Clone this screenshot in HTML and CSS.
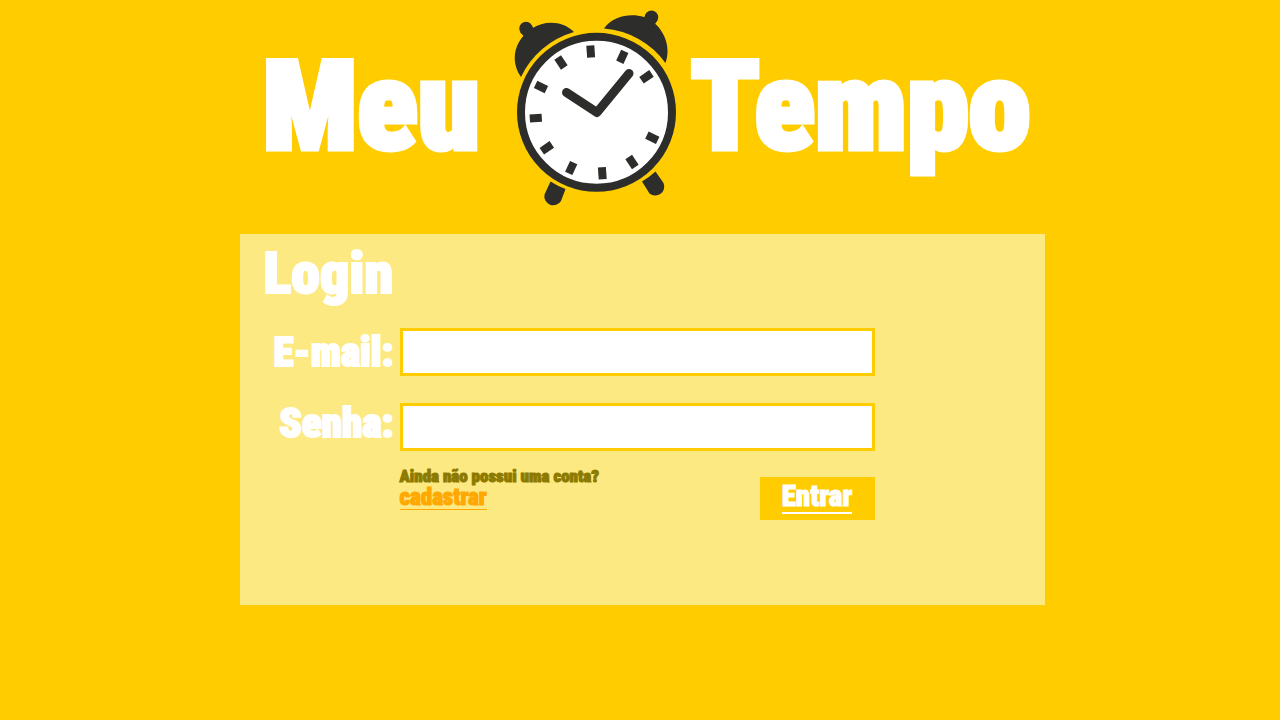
FILE: index.html
```html
<!DOCTYPE html>
<html lang="pt-BR">
<head>
<meta charset="utf-8">
<meta name="viewport" content="width=device-width, initial-scale=1">
<title>Meu Tempo</title>
<link rel="stylesheet" href="styles.css">
</head>
<body>
<div class="page">
  <h1 class="brand">
    <span class="brand-word">Meu</span>
    <svg class="clock" viewBox="510 5 170 205" aria-hidden="true">
      <g fill="#2d2d2b">
        <path d="M521 77C513 66 513 52 519 42C522 37 526 32 532 28.500C545 20 563 21 574 32A84 84 0 0 0 521 77Z"/>
        <path d="M604 28.500C613 16 630 13 644 17C663 24 672 46 665.500 63A84 84 0 0 0 604 28.500Z"/>
        <circle cx="526" cy="28.500" r="6.700"/>
        <circle cx="651.500" cy="17.200" r="6.700"/>
        <path d="M520 32L530 43L539 36L532 26Z"/>
        <path d="M645.500 14L642 25L652 29L657.500 20Z"/>
        <path d="M550.500 181.500A84 84 0 0 0 565.500 189L561 201A9 9 0 0 1 544.500 194.500Z"/>
        <path d="M642 181.500A84 84 0 0 0 655.500 171.500L663.500 183A9 9 0 0 1 649.500 193.500Z"/>
      </g>
      <circle cx="596.500" cy="112.300" r="75.500" fill="#fff" stroke="#2d2d2b" stroke-width="8"/>
      <g stroke="#2d2d2b" stroke-width="8">
        <path d="M590.300 45.500L591.100 57.500"/>
        <path d="M624.800 51.400L619.800 62.200"/>
        <path d="M651.500 73.400L641.500 80.200"/>
        <path d="M557.700 57.500L564.300 67.500"/>
        <path d="M535.600 84.400L546.400 89.600"/>
        <path d="M529.800 118.600L541.800 117.800"/>
        <path d="M541.800 151.200L551.800 144.400"/>
        <path d="M568.700 173.400L573.700 162.600"/>
        <path d="M602.700 179.300L601.900 167.300"/>
        <path d="M635.300 167L628.700 157"/>
        <path d="M657.700 140.300L646.900 135.100"/>
      </g>
      <path d="M566.500 92.500L597 112.500L629 73.500" fill="none" stroke="#2d2d2b" stroke-width="9" stroke-linecap="round" stroke-linejoin="round"/>
    </svg>
    <span class="brand-word">Tempo</span>
  </h1>

  <main class="panel">
    <h2 class="panel-title">Login</h2>
    <form class="login">
      <label class="label" for="email">E-mail:</label>
      <input class="field" id="email" name="email" type="email">
      <label class="label label-senha" for="senha">Senha:</label>
      <input class="field" id="senha" name="senha" type="password">
      <div class="actions">
        <p class="signup">Ainda não possui uma conta?<br><a class="signup-link" href="#cadastrar">cadastrar</a></p>
        <button class="submit" type="submit"><span class="submit-text">Entrar</span></button>
      </div>
    </form>
  </main>
</div>
</body>
</html>
```
FILE: styles.css
```css
* {
  box-sizing: border-box;
}

body {
  margin: 0;
  padding-left: 4px;
  background: #ffcc00;
  color: #fff;
  font-family: Impact, "Roboto Condensed", "Liberation Sans Narrow", "Liberation Sans", sans-serif;
  font-weight: 900;
}

.page {
  max-width: 805px;
  margin: 0 auto;
}

.brand {
  display: grid;
  grid-template-columns: 236px 170px 1fr;
  column-gap: 11px;
  align-items: start;
  margin: 0;
  padding: 5px 12px 24px 23px;
  font-size: 125px;
  font-weight: 900;
  line-height: 203px;
  -webkit-text-stroke: 5px #fff;
}

.clock {
  display: block;
  width: 170px;
  height: 205px;
}

.panel {
  padding: 8px 24px 85px;
  background: #fde982;
}

.panel-title {
  margin: 0;
  padding-bottom: 2px;
  font-size: 58px;
  font-weight: 900;
  line-height: 62px;
  -webkit-text-stroke: 2px #fff;
}

.login {
  display: grid;
  grid-template-columns: 130px minmax(0, 475px);
  column-gap: 6px;
  row-gap: 27px;
  padding-top: 22px;
}

.label {
  font-size: 41px;
  line-height: 48px;
  text-align: right;
  -webkit-text-stroke: 2px #fff;
}

.label-senha {
  line-height: 40px;
}

.field {
  width: 100%;
  height: 48px;
  padding: 0 12px;
  border: 3px solid #ffcc00;
  border-radius: 0;
  background: #fff;
  font: 400 24px "Liberation Sans", sans-serif;
}

.actions {
  display: flex;
  grid-column: 2;
  align-items: flex-start;
  justify-content: space-between;
  margin-top: -12px;
}

.signup {
  margin: 0;
  color: #8c7a00;
  font-size: 17px;
  line-height: 20px;
  -webkit-text-stroke: 1px;
}

.signup-link {
  display: inline-block;
  border-bottom: 1px solid #ffa800;
  color: #ffa800;
  font-size: 23px;
  line-height: 23px;
  text-decoration: none;
}

.submit {
  width: 115px;
  height: 43px;
  margin-top: 11px;
  padding: 0 0 4px;
  border: 0;
  background: #ffcc00;
  color: #fff;
  font: inherit;
  font-size: 29px;
  line-height: 32px;
  -webkit-text-stroke: 1px #fff;
}

.submit-text {
  display: inline-block;
  border-bottom: 2px solid #fff;
}
```
